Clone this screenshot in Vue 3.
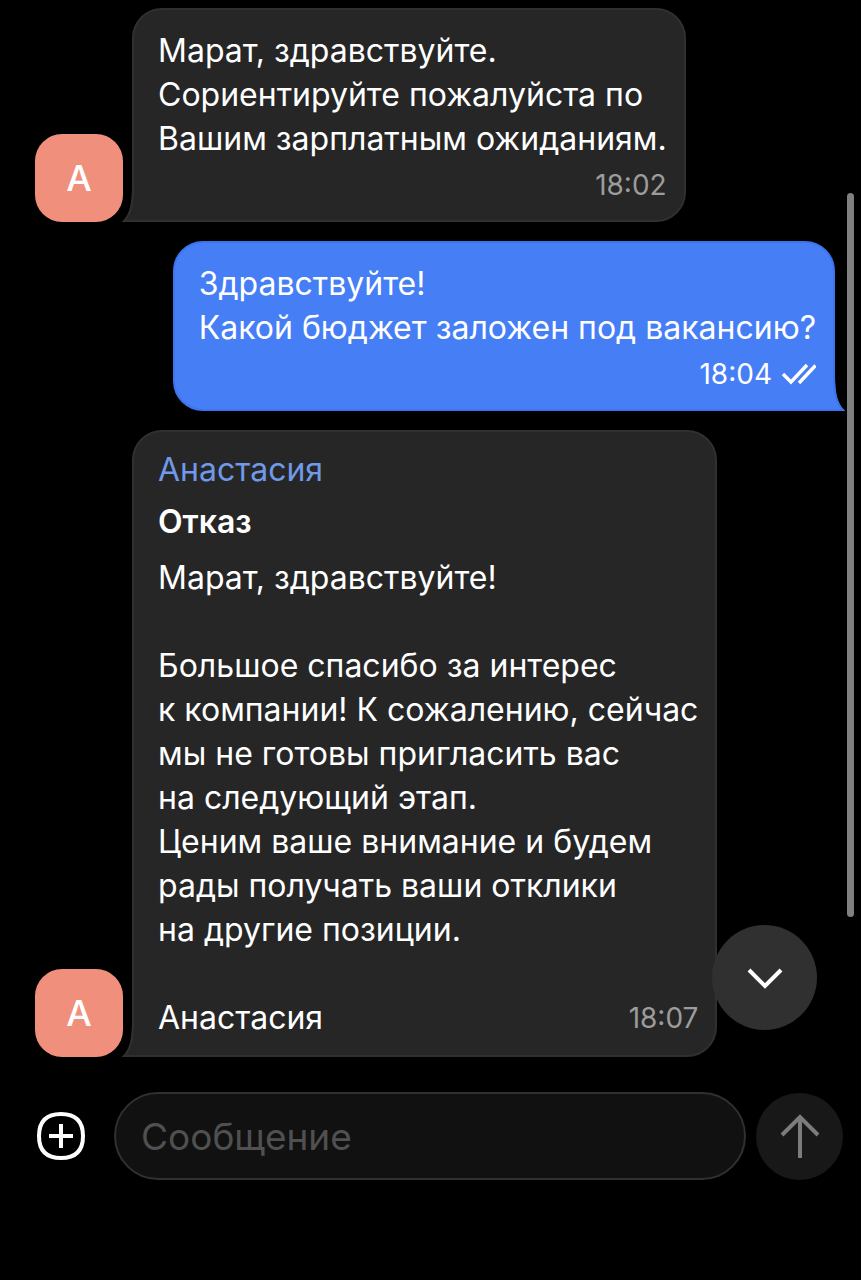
<template>
  <div class="chat">
    <main class="messages">
      <article
        v-for="message in messages"
        :key="message.id"
        class="row"
        :class="{ own: message.own }"
      >
        <div v-if="!message.own" class="avatar">А</div>
        <div class="bubble" :class="{ letter: message.signature }">
          <a v-if="message.author" class="author" href="#">{{ message.author }}</a>
          <h2 v-if="message.title" class="title">{{ message.title }}</h2>
          <p class="text">{{ message.text }}</p>
          <div class="footer">
            <span v-if="message.signature">{{ message.signature }}</span>
            <div class="meta">
              <time>{{ message.time }}</time>
              <svg v-if="message.own" class="checks" viewBox="0 0 36 22">
                <path d="M3 11 L11 19 L27 2 M19 20 L35.5 2.5" />
              </svg>
            </div>
          </div>
          <svg class="tail" viewBox="0 0 12 36">
            <path class="tail-fill" d="M12 0 H10 C10 18 8 28 0 36 H12 Z" />
            <path class="tail-line" d="M11 0 C11 18 9 28 2 35 H12" />
          </svg>
        </div>
      </article>

      <div class="scroll-thumb"></div>
      <button class="scroll-down" type="button" aria-label="Вниз" @click="scrollDown">
        <svg viewBox="0 0 36 24">
          <path d="M2 4 L18 20 L34 4" />
        </svg>
      </button>
    </main>

    <form class="composer" @submit.prevent="send">
      <button class="attach" type="button" aria-label="Прикрепить">
        <svg viewBox="0 0 50 50">
          <path d="M25 3 C39.5 3 47 10.5 47 25 C47 39.5 39.5 47 25 47 C10.5 47 3 39.5 3 25 C3 10.5 10.5 3 25 3 Z" />
          <path d="M25 13 V37 M13 25 H37" />
        </svg>
      </button>
      <input v-model="draft" class="field" type="text" placeholder="Сообщение" aria-label="Сообщение" />
      <button class="send" type="submit" aria-label="Отправить">
        <svg viewBox="0 0 40 46">
          <path d="M20 45 V4 M2 22 L20 4 L38 22" />
        </svg>
      </button>
    </form>
  </div>
</template>

<script setup>
import { ref } from 'vue'

const draft = ref('')

const messages = ref([
  {
    id: 1,
    text: 'Марат, здравствуйте.\nСориентируйте пожалуйста по\nВашим зарплатным ожиданиям.',
    time: '18:02'
  },
  {
    id: 2,
    own: true,
    text: 'Здравствуйте!\nКакой бюджет заложен под вакансию?',
    time: '18:04'
  },
  {
    id: 3,
    author: 'Анастасия',
    title: 'Отказ',
    text: 'Марат, здравствуйте!\n\nБольшое спасибо за интерес\nк компании! К сожалению, сейчас\nмы не готовы пригласить вас\nна следующий этап.\nЦеним ваше внимание и будем\nрады получать ваши отклики\nна другие позиции.',
    signature: 'Анастасия',
    time: '18:07'
  }
])

const send = () => {
  const text = draft.value.trim()
  if (!text) return
  const time = new Date().toTimeString().slice(0, 5)
  messages.value.push({ id: Date.now(), own: true, text, time })
  draft.value = ''
}

const scrollDown = () => {
  window.scrollTo({ top: document.body.scrollHeight, behavior: 'smooth' })
}
</script>

<style>
body {
  margin: 0;
  background: #000;
}
</style>

<style scoped>
.chat {
  display: flex;
  flex-direction: column;
  min-height: 100vh;
  box-sizing: border-box;
  background: #000;
  color: #fff;
  font-family: Inter, "Liberation Sans", sans-serif;
  font-size: 32px;
  line-height: 44px;
}

.messages {
  position: relative;
  display: flex;
  flex-direction: column;
  gap: 19px;
  padding: 8px 26px 35px 35px;
}

.row {
  display: flex;
  align-items: flex-end;
  gap: 9px;
}

.own {
  justify-content: flex-end;
}

.avatar {
  flex: none;
  width: 88px;
  height: 88px;
  border-radius: 27px;
  background: #f0907c;
  font-size: 36px;
  font-weight: 500;
  line-height: 88px;
  text-align: center;
}

.bubble {
  position: relative;
  box-sizing: border-box;
  padding: 19px 17px 13px 24px;
  border: 2px solid #303030;
  border-radius: 30px 30px 30px 0;
  background: #262626;
}

.own .bubble {
  border-color: #3d74ee;
  border-radius: 30px 30px 0 30px;
  background: #467ef6;
}

.bubble.letter {
  padding-top: 16px;
}

.author {
  display: block;
  margin-bottom: 8px;
  color: #7099e8;
  text-decoration: none;
}

.title {
  margin: 0 0 12px;
  font-size: 32px;
  font-weight: 600;
}

.text {
  margin: 0;
  white-space: pre-line;
}

.footer {
  display: flex;
  justify-content: flex-end;
  padding-top: 2px;
}

.letter .footer {
  justify-content: space-between;
  padding-top: 44px;
  padding-bottom: 2px;
}

.meta {
  display: flex;
  align-items: center;
  gap: 8px;
  color: #9c9c9c;
  font-size: 28px;
}

.own .meta {
  color: #fff;
}

.checks {
  width: 36px;
  height: 22px;
  fill: none;
  stroke: currentColor;
  stroke-width: 3.4;
}

.tail {
  position: absolute;
  left: -12px;
  bottom: -2px;
  width: 12px;
  height: 36px;
}

.own .tail {
  right: -12px;
  left: auto;
  transform: scaleX(-1);
}

.tail-fill {
  fill: #262626;
}

.tail-line {
  fill: none;
  stroke: #303030;
  stroke-width: 2;
}

.own .tail-fill {
  fill: #467ef6;
}

.own .tail-line {
  stroke: #3d74ee;
}

.scroll-thumb {
  position: absolute;
  top: 193px;
  right: 7px;
  bottom: 175px;
  width: 7px;
  border-radius: 4px;
  background: #808080;
}

button {
  display: flex;
  flex: none;
  align-items: center;
  justify-content: center;
  padding: 0;
  border: none;
  background: none;
  cursor: pointer;
}

button svg {
  fill: none;
  stroke: #fff;
  stroke-width: 4;
}

.scroll-down {
  position: absolute;
  right: 44px;
  bottom: 62px;
  width: 105px;
  height: 105px;
  border-radius: 50%;
  background: #303030;
}

.scroll-down svg {
  width: 36px;
  height: 24px;
}

.composer {
  display: flex;
  align-items: center;
  gap: 10px;
  padding: 0 18px 24px 36px;
}

.attach {
  margin-right: 18px;
}

.attach svg {
  width: 50px;
  height: 50px;
}

.field {
  flex: 1;
  min-width: 0;
  height: 88px;
  box-sizing: border-box;
  padding: 0 25px;
  border: 2px solid #303030;
  border-radius: 44px;
  outline: none;
  background: #111;
  color: #fff;
  font-family: inherit;
  font-size: 37px;
}

.field::placeholder {
  color: #505050;
  opacity: 1;
}

.send {
  width: 87px;
  height: 87px;
  border-radius: 50%;
  background: #181818;
}

.send svg {
  width: 40px;
  height: 46px;
  stroke: #7c7c7c;
}
</style>
